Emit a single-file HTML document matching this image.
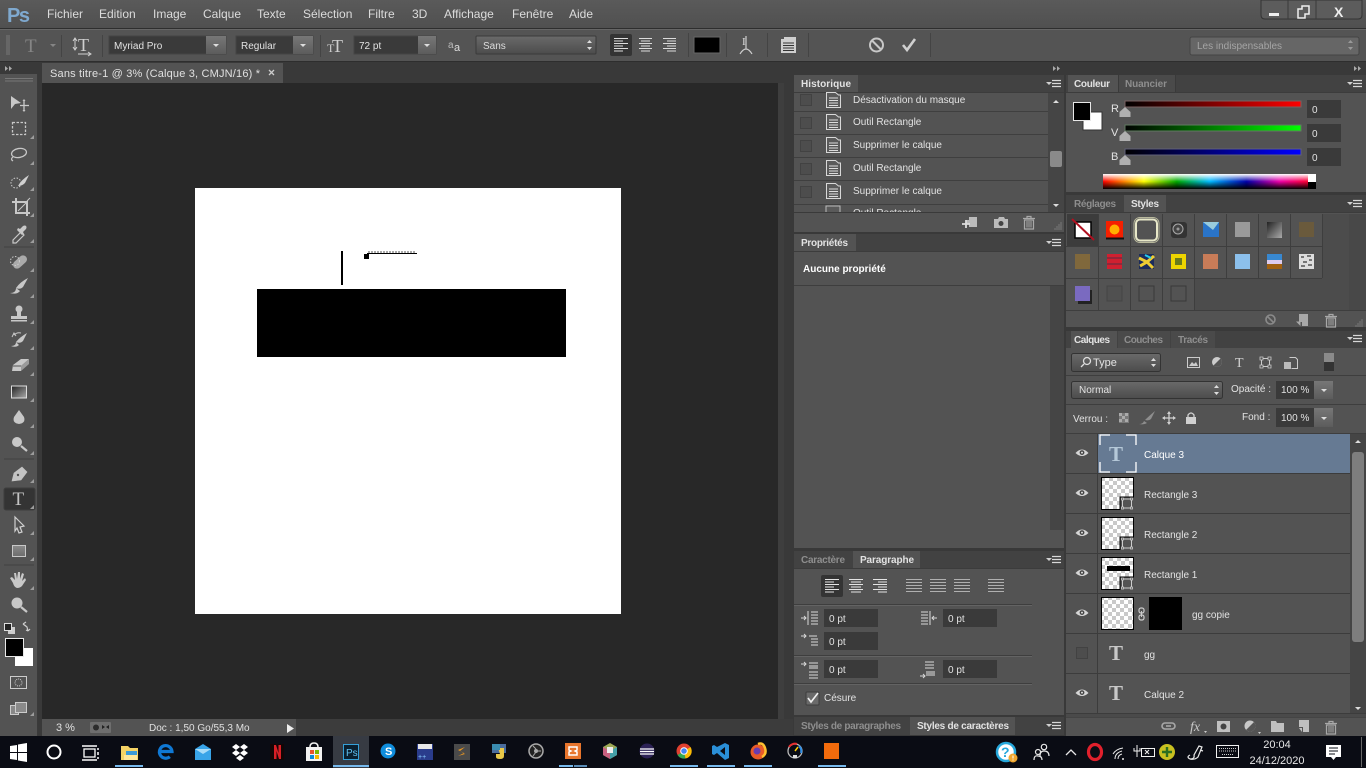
<!DOCTYPE html>
<html lang="fr"><head><meta charset="utf-8"><title>Photoshop</title>
<style>
html,body{margin:0;padding:0;background:#535353;overflow:hidden;width:1366px;height:768px}
svg{display:block}
text{font-family:"Liberation Sans",sans-serif;font-size:10px;fill:#e2e2e2}
.m{font-size:12px;fill:#dcdcdc}
.d{fill:#8e8e8e}
.b{font-weight:bold}
.w{fill:#fff}
.ic{fill:none;stroke:#cfcfcf;stroke-width:1.2}
.g{fill:#c4c4c4}
</style></head><body>
<svg width="1366" height="768" viewBox="0 0 1366 768" xmlns="http://www.w3.org/2000/svg">
<defs>
<linearGradient id="bar" x1="0" y1="0" x2="0" y2="1"><stop offset="0" stop-color="#5a5a5a"/><stop offset="1" stop-color="#505050"/></linearGradient>
<linearGradient id="btn" x1="0" y1="0" x2="0" y2="1"><stop offset="0" stop-color="#777"/><stop offset="1" stop-color="#5c5c5c"/></linearGradient>
<linearGradient id="sel" x1="0" y1="0" x2="0" y2="1"><stop offset="0" stop-color="#6a6a6a"/><stop offset="1" stop-color="#4c4c4c"/></linearGradient>
<linearGradient id="gr"><stop offset="0" stop-color="#000"/><stop offset="1" stop-color="#f00"/></linearGradient>
<linearGradient id="gg"><stop offset="0" stop-color="#000"/><stop offset="1" stop-color="#0f0"/></linearGradient>
<linearGradient id="gb"><stop offset="0" stop-color="#000"/><stop offset="1" stop-color="#00f"/></linearGradient>
<linearGradient id="hue"><stop offset="0" stop-color="#f00"/><stop offset=".2" stop-color="#ff0"/><stop offset=".36" stop-color="#0a0"/><stop offset=".52" stop-color="#0bf"/><stop offset=".7" stop-color="#00a"/><stop offset=".86" stop-color="#e0a"/><stop offset="1" stop-color="#f03"/></linearGradient>
<linearGradient id="wh" x1="0" y1="0" x2="0" y2="1"><stop offset="0" stop-color="#fff"/><stop offset=".5" stop-color="#fff" stop-opacity="0"/><stop offset=".5" stop-color="#000" stop-opacity="0"/><stop offset="1" stop-color="#000"/></linearGradient>
<linearGradient id="grey" x1="0" y1="0" x2="1" y2="1"><stop offset="0" stop-color="#222"/><stop offset="1" stop-color="#aaa"/></linearGradient>
<linearGradient id="thumb" x1="0" y1="0" x2="0" y2="1"><stop offset="0" stop-color="#8a8a8a"/><stop offset="1" stop-color="#6c6c6c"/></linearGradient>
<pattern id="chk" width="8" height="8" patternUnits="userSpaceOnUse"><rect width="8" height="8" fill="#fff"/><rect width="4" height="4" fill="#c9c9c9"/><rect x="4" y="4" width="4" height="4" fill="#c9c9c9"/></pattern>
<symbol id="fly" width="16" height="8" viewBox="0 0 16 8" overflow="visible"><path d="M0 2h6l-3 3z" fill="#d0d0d0"/><path d="M6 .5h9M6 3.5h9M6 6.5h9" stroke="#d8d8d8" stroke-width="1.2"/></symbol>
<symbol id="doc" width="15" height="16" viewBox="0 0 15 16" overflow="visible"><path d="M.5.5h9l3 2.5h2v12.500h-14z" fill="#5a5a5a" stroke="#d8d8d8"/><path d="M3 6h9M3 8.500h9M3 11h9M3 13.500h9" stroke="#dcdcdc"/></symbol>
<symbol id="eye" width="14" height="10" viewBox="0 0 14 10" overflow="visible"><path d="M.5 5Q7-2 13.500 5 7 11 .5 5z" fill="#d6d6d6"/><circle cx="7" cy="4.600" r="2.400" fill="#444"/><circle cx="7" cy="4.600" r="1" fill="#ddd"/></symbol>
<symbol id="rthumb" width="34" height="34" viewBox="0 0 34 34" overflow="visible"><rect x=".5" y=".5" width="32" height="32" fill="url(#chk)" stroke="#000"/><rect x="19" y="20" width="15" height="14" fill="#535353"/><path d="M19 33V20h14" fill="none" stroke="#000"/><rect x="21.500" y="22" width="9" height="9" fill="none" stroke="#ccc"/><path d="M20.500 21h2v2h-2zM29.500 21h2v2h-2zM20.500 30h2v2h-2zM29.500 30h2v2h-2z" fill="#535353" stroke="#ccc" stroke-width=".8"/></symbol>
<symbol id="trash" width="12" height="13" viewBox="0 0 12 13" overflow="visible"><path d="M0 2.500h12M4 2.500V.5h4v2" fill="none" stroke="#a8a8a8" stroke-width="1.200"/><path d="M1.500 4h9v9h-9z" fill="none" stroke="#a8a8a8" stroke-width="1.200"/><path d="M4 5v6.500M6 5v6.500M8 5v6.500" stroke="#a8a8a8"/></symbol>
<symbol id="newl" width="12" height="12" viewBox="0 0 12 12" overflow="visible"><path d="M3 0h9v12H6V8H3z" fill="#a8a8a8"/><path d="M0 7.500h4.500V12z" fill="#a8a8a8"/></symbol>
<symbol id="grip" width="8" height="8" viewBox="0 0 8 8" overflow="visible"><path d="M6.500 .5h1v1h-1zM4.500 2.500h1v1h-1zM6.500 2.500h1v1h-1zM2.500 4.500h1v1h-1zM4.500 4.500h1v1h-1zM6.500 4.500h1v1h-1zM.5 6.500h1v1h-1zM2.500 6.500h1v1h-1zM4.500 6.500h1v1h-1zM6.500 6.500h1v1h-1z" fill="#9a9a9a"/></symbol>
<symbol id="lines" width="16" height="13" viewBox="0 0 16 13" overflow="visible"><path d="M0 .5h16M0 3.500h16M0 6.500h16M0 9.500h16M0 12.500h16" stroke="#b0b0b0"/></symbol>
<symbol id="cor" width="4" height="4" viewBox="0 0 4 4"><path d="M0 4L4 0v4z" fill="#9c9c9c"/></symbol>
</defs>

<!-- base -->
<rect width="1366" height="768" fill="#535353"/>
<rect width="1366" height="28" fill="url(#bar)"/>
<rect y="28" width="1366" height="1" fill="#2e2e2e"/>
<rect y="29" width="1366" height="33" fill="#545454"/>
<rect y="29" width="1366" height="1" fill="#666"/>
<rect y="61" width="1366" height="1" fill="#2e2e2e"/>

<!-- menu -->
<text x="7" y="22" style="font-size:20px;fill:#7fa9cf;font-weight:bold" textLength="23">Ps</text>
<text class="m" x="47" y="18">Fichier</text>
<text class="m" x="99" y="18">Edition</text>
<text class="m" x="153" y="18">Image</text>
<text class="m" x="203" y="18">Calque</text>
<text class="m" x="257" y="18">Texte</text>
<text class="m" x="303" y="18">Sélection</text>
<text class="m" x="368" y="18">Filtre</text>
<text class="m" x="412" y="18">3D</text>
<text class="m" x="444" y="18">Affichage</text>
<text class="m" x="512" y="18">Fenêtre</text>
<text class="m" x="569" y="18">Aide</text>

<!-- window buttons -->
<path d="M1261 0v15q0 4 4 4h93q4 0 4-4V0z" fill="#5c5c5c" stroke="#333"/>
<path d="M1288 0v19M1316 0v19" stroke="#3a3a3a"/>
<rect x="1269" y="13" width="10" height="3" fill="#eee"/>
<path d="M1298 9h4v-3h7v8h-4v4h-7z" fill="none" stroke="#eee" stroke-width="1.500"/>
<text x="1334" y="17" style="font-size:14px;font-weight:bold;fill:#eee">X</text>

<!-- options bar -->
<g stroke="#444"><path d="M61.500 35v22M102.500 35v22M320.500 35v22M688.500 33v24M726.500 33v24M767.500 33v24M808.500 33v24M930.500 33v24"/></g>
<path d="M6 36h4M6 38h4M6 40h4M6 42h4M6 44h4M6 46h4M6 48h4M6 50h4M6 52h4M6 54h4" stroke="#777"/>
<text x="25" y="52" style="font-family:'Liberation Serif',serif;font-size:19px;fill:#858585">T</text>
<path d="M50 44h6l-3 3z" fill="#858585"/>
<text x="78" y="51" style="font-family:'Liberation Serif',serif;font-size:18px;fill:#cfcfcf">T</text>
<path d="M75 38v12M73 41l2-3 2 3M73 47l2 3 2-3M78 54h12M88 52l3 2-3 2" fill="none" stroke="#cfcfcf"/>

<rect x="109" y="36" width="117" height="18" fill="#3a3a3a" stroke="#444"/>
<rect x="206" y="36" width="20" height="18" fill="url(#btn)"/>
<path d="M213 44h6l-3 3z" fill="#ddd"/>
<text x="114" y="49">Myriad Pro</text>
<rect x="236" y="36" width="77" height="18" fill="#3a3a3a" stroke="#444"/>
<rect x="293" y="36" width="20" height="18" fill="url(#btn)"/>
<path d="M300 44h6l-3 3z" fill="#ddd"/>
<text x="241" y="49">Regular</text>
<text x="332" y="52" style="font-family:'Liberation Serif',serif;font-size:18px;fill:#cfcfcf">T</text>
<text x="327" y="52" style="font-family:'Liberation Serif',serif;font-size:12px;fill:#cfcfcf">T</text>
<rect x="354" y="36" width="82" height="18" fill="#3a3a3a" stroke="#444"/>
<rect x="418" y="36" width="18" height="18" fill="url(#btn)"/>
<path d="M424 44h6l-3 3z" fill="#ddd"/>
<text x="359" y="49">72 pt</text>
<text x="448" y="48" style="font-size:10px;fill:#bbb">a</text>
<text x="454" y="51" style="font-size:11px;fill:#ddd">a</text>
<rect x="476" y="36" width="120" height="18" fill="url(#sel)" stroke="#3a3a3a" rx="1"/>
<text x="483" y="49" style="fill:#ddd">Sans</text>
<path d="M587 43l2.500-3 2.500 3zM587 47l2.500 3 2.500-3z" fill="#ddd"/>

<rect x="610" y="34" width="22" height="22" rx="2" fill="#343434"/>
<g stroke="#dcdcdc"><path d="M614 38.500h14M614 41h9M614 43.500h14M614 46h9M614 48.500h14M614 51h9"/>
<path d="M639 38.500h13M641 41h9M639 43.500h13M641 46h9M639 48.500h13M641 51h9"/>
<path d="M663 38.500h13M667 41h9M663 43.500h13M667 46h9M663 48.500h13M667 51h9"/></g>
<rect x="694" y="37" width="26" height="16" fill="#000" stroke="#666"/>
<text x="742" y="45" style="font-family:'Liberation Serif',serif;font-size:11px;fill:#ddd">I</text>
<path d="M740 54q6-10 12 0M746 36v13" fill="none" stroke="#d0d0d0" stroke-width="1.200"/>
<path d="M781 39h3v-2h12v16h-15z" fill="#cfcfcf"/><path d="M783 43h11M783 45.500h11M783 48h11M783 50.500h11" stroke="#333"/>
<circle cx="876.500" cy="45" r="6.500" fill="none" stroke="#c8c8c8" stroke-width="2"/><path d="M872 40.500l9 9" stroke="#c8c8c8" stroke-width="2"/>
<path d="M903 45l4 5 8-11" fill="none" stroke="#d0d0d0" stroke-width="2.600"/>
<rect x="1190" y="37" width="169" height="18" rx="2" fill="#666" stroke="#444"/>
<text x="1197" y="49" style="fill:#a5a5a5">Les indispensables</text>
<path d="M1348 43l2.500-3 2.500 3zM1348 47l2.500 3 2.500-3z" fill="#999"/>

<!-- doc area -->
<rect y="62" width="1366" height="12" fill="#393939"/>
<rect x="38" y="62" width="755" height="21" fill="#393939"/>
<rect x="42" y="63" width="241" height="20" fill="#535353"/>
<text x="50" y="77" style="fill:#e0e0e0;font-size:11px" textLength="210">Sans titre-1 @ 3% (Calque 3, CMJN/16) *</text>
<path d="M269 70l5 5M274 70l-5 5" stroke="#ccc" stroke-width="1.300"/>
<rect x="42" y="83" width="736" height="636" fill="#282828"/>
<rect x="778" y="83" width="15" height="652" fill="#3e3e3e"/>
<rect x="784" y="83" width="9" height="652" fill="#393939"/>
<rect x="38" y="62" width="4" height="674" fill="#393939"/>
<rect x="296" y="719" width="497" height="17" fill="#3c3c3c"/>
<rect x="42" y="719" width="254" height="17" fill="#535353"/>
<text x="56" y="731" style="font-size:11px;fill:#e0e0e0">3 %</text>
<rect x="90" y="722" width="21" height="11" rx="1" fill="#6e6e6e"/>
<circle cx="96" cy="727.500" r="3" fill="#2c2c2c"/><path d="M102 725l3 2-3 2zM109 725l-3 2 3 2z" fill="#222"/>
<text x="149" y="731" style="fill:#e0e0e0">Doc : 1,50 Go/55,3 Mo</text>
<path d="M287 724l7 4.500-7 4.500z" fill="#eee"/>

<!-- canvas -->
<rect x="195" y="188" width="426" height="426" fill="#fff"/>
<rect x="257" y="289" width="309" height="68" fill="#000"/>
<rect x="341" y="251" width="2" height="34" fill="#000"/>
<rect x="364" y="254" width="5" height="5" fill="#000"/>
<rect x="367" y="253" width="50" height="1" fill="#000"/>
<path d="M369 251v2M372 251v2M375 251v2M378 251v2M381 251v2M384 251v2M387 251v2M390 251v2M393 251v2M396 251v2M399 251v2M402 251v2M405 251v2M408 251v2M411 251v2M414 251v2" stroke="#555"/>

<!-- toolbar -->
<rect y="62" width="38" height="12" fill="#393939"/>
<path d="M5 66l3 2.500-3 2.500zM9 66l3 2.500-3 2.500z" fill="#aaa"/>
<rect y="74" width="38" height="662" fill="#535353"/>
<path d="M5 78.500h28M5 81h28" stroke="#777"/>
<rect y="720" width="38" height="16" fill="#535353"/>
<rect x="37" y="74" width="1" height="662" fill="#3a3a3a"/>
<path d="M4 247h30M4 459h30M4 565h30" stroke="#404040"/>

<path d="M11 96l10 7-6 1-4 5z" fill="#c8c8c8"/><path d="M24 101v9M20 105.500h9" stroke="#c8c8c8" stroke-width="1.300"/><path d="M22.500 101l1.500-2 1.500 2zM22.500 110l1.500 2 1.500-2z" fill="#c8c8c8"/>
<rect x="12.500" y="122.500" width="13" height="12" fill="none" stroke="#c8c8c8" stroke-width="1.300" stroke-dasharray="2.500 1.500"/>
<ellipse cx="19" cy="153" rx="7.500" ry="4.500" fill="none" stroke="#c8c8c8" stroke-width="1.300" transform="rotate(-10 19 153)"/><path d="M13 157q-3 2 0 4" fill="none" stroke="#c8c8c8" stroke-width="1.300"/>
<circle cx="16" cy="183" r="5" fill="none" stroke="#d0d0d0" stroke-dasharray="1.500 1.500"/><path d="M18 186q3-6 11-11l-4 8q-3 3-7 3z" fill="#d0d0d0"/>
<path d="M12 202h15v14M16 198v15h14" fill="none" stroke="#c8c8c8" stroke-width="2"/><path d="M18 211l9-9M30 198l-3 3" stroke="#c8c8c8"/>
<path d="M13 240l8-8 3 3-8 8h-3z" fill="none" stroke="#c8c8c8" stroke-width="1.200"/><path d="M20 229l3-3q2-1 3 0t0 3l-3 3 1 2-2 1-5-5 1-2z" fill="#c8c8c8"/>
<rect x="12" y="258" width="16" height="8" rx="4" transform="rotate(-42 20 262)" fill="#aaa"/><circle cx="15" cy="261" r="4.500" fill="none" stroke="#ccc" stroke-dasharray="1.500 1.500"/>
<path d="M16 288q4-6 12-10l-5 9q-3 3-7 1z" fill="#c8c8c8"/><path d="M10 293q6 0 6-5l4 3q-3 4-10 2z" fill="#c8c8c8"/>
<circle cx="19" cy="309" r="3.500" fill="#c8c8c8"/><rect x="17" y="311" width="4" height="5" fill="#c8c8c8"/><rect x="11" y="316" width="16" height="3" fill="#c8c8c8"/><rect x="11" y="320" width="16" height="1.500" fill="#c8c8c8"/>
<path d="M16 342q4-5 11-9l-4 8q-3 3-7 1zM11 346q5 0 5-4l3 3q-3 3-8 1z" fill="#c8c8c8"/><path d="M14 335q3-3 7-2M12 337l2-4 2 3" fill="none" stroke="#c8c8c8"/>
<path d="M13 365l8-6h8l-8 7v5h-9z" fill="#c8c8c8"/><path d="M21 366h-8" stroke="#535353"/><path d="M21 366l8-7v5l-8 7z" fill="#9a9a9a"/>
<rect x="11.500" y="386" width="15" height="12" fill="url(#grey)" stroke="#ddd"/>
<path d="M19 410l5 7q2 6-5 7-7-1-5-7z" fill="#c8c8c8"/>
<circle cx="17" cy="442" r="5" fill="#c8c8c8"/><path d="M21 446l6 5" stroke="#c8c8c8" stroke-width="2.200"/>
<path d="M12 481l2-8 8-6 5 5-6 8zM19 476l-6 5" fill="#c4c4c4" stroke="#c4c4c4" stroke-width=".6"/><circle cx="18" cy="475" r="1.200" fill="#535353"/>
<rect x="4" y="488" width="31" height="22" rx="2" fill="#343434" stroke="#3e3e3e"/>
<text x="12.500" y="505" style="font-family:'Liberation Serif',serif;font-size:19px;fill:#c4c4c4">T</text>
<path d="M15 517l9 9-4 1 2 5-3 1-2-5-2 3z" fill="#535353" stroke="#d0d0d0" stroke-width="1.200"/>
<rect x="12.500" y="545.500" width="13" height="11" fill="url(#thumb)" stroke="#c8c8c8"/>
<path d="M13 583l-3-5 2-1 3 3-1-7h2l1 6 1-7h2v7l2-6 2 1-2 7 3-3 1 2-4 6q-2 2-5 2-3-1-4-5z" fill="#c8c8c8"/>
<circle cx="17" cy="603" r="5.500" fill="#c8c8c8"/><path d="M21 607l6 5" stroke="#c8c8c8" stroke-width="2.200"/>
<rect x="8" y="627" width="7" height="7" fill="#ccc" /><rect x="4.500" y="623.500" width="7" height="7" fill="#222" stroke="#ddd"/>
<path d="M23 624l4 3 1 4M23 624l3-2M23 624l3 2M28 631l-2-1M28 631l2-2" fill="none" stroke="#ccc" stroke-width="1.200"/>
<rect x="15" y="648" width="18" height="18" fill="#fff"/>
<rect x="5.500" y="638.500" width="18" height="18" fill="#000" stroke="#e8e8e8"/>
<rect x="10.500" y="676.500" width="16" height="12" fill="none" stroke="#ccc"/><circle cx="18.500" cy="682.500" r="3.500" fill="none" stroke="#ccc" stroke-dasharray="1 1"/>
<rect x="10.500" y="705.500" width="8" height="9" fill="#888" stroke="#ccc"/><rect x="15.500" y="702.500" width="11" height="10" fill="#8a8a8a" stroke="#ccc"/>
<g><use href="#cor" x="30" y="135"/><use href="#cor" x="30" y="161"/><use href="#cor" x="30" y="187"/><use href="#cor" x="30" y="213"/><use href="#cor" x="30" y="239"/><use href="#cor" x="30" y="268"/><use href="#cor" x="30" y="294"/><use href="#cor" x="30" y="320"/><use href="#cor" x="30" y="346"/><use href="#cor" x="30" y="372"/><use href="#cor" x="30" y="398"/><use href="#cor" x="30" y="424"/><use href="#cor" x="30" y="451"/><use href="#cor" x="30" y="479"/><use href="#cor" x="30" y="505"/><use href="#cor" x="30" y="531"/><use href="#cor" x="30" y="557"/><use href="#cor" x="30" y="586"/><use href="#cor" x="30" y="712"/></g>

<!-- panel column collapse bars -->
<rect x="793" y="62" width="573" height="674" fill="#393939"/>
<path d="M1053 66l3 2.500-3 2.500zM1057 66l3 2.500-3 2.500zM1354 66l3 2.500-3 2.500zM1358 66l3 2.500-3 2.500z" fill="#aaa"/>

<!-- HISTORIQUE -->
<rect x="794" y="75" width="270" height="157" fill="#535353"/>
<rect x="794" y="75" width="270" height="17" fill="#424242"/>
<rect x="794" y="75" width="64" height="17" fill="#535353"/>
<text class="b" x="801" y="87" textLength="50">Historique</text>
<use href="#fly" x="1046" y="80"/>
<rect x="794" y="92" width="270" height="1" fill="#3c3c3c"/>
<g fill="#3f3f3f">
<rect x="794" y="111" width="254" height="1"/><rect x="794" y="134" width="254" height="1"/><rect x="794" y="157" width="254" height="1"/><rect x="794" y="180" width="254" height="1"/><rect x="794" y="204" width="254" height="1"/></g>
<g fill="#4d4d4d" stroke="#424242"><rect x="800.500" y="94.500" width="11" height="11"/><rect x="800.500" y="117.500" width="11" height="11"/><rect x="800.500" y="140.500" width="11" height="11"/><rect x="800.500" y="163.500" width="11" height="11"/><rect x="800.500" y="186.500" width="11" height="11"/></g>
<use href="#doc" x="826" y="92"/><use href="#doc" x="826" y="114"/><use href="#doc" x="826" y="137"/><use href="#doc" x="826" y="160"/><use href="#doc" x="826" y="183"/>
<text x="853" y="103">Désactivation du masque</text>
<text x="853" y="125">Outil Rectangle</text>
<text x="853" y="148">Supprimer le calque</text>
<text x="853" y="171">Outil Rectangle</text>
<text x="853" y="194">Supprimer le calque</text>
<rect x="1048" y="93" width="16" height="120" fill="#454545"/>
<rect x="1050" y="151" width="12" height="16" rx="2" fill="#8a8a8a"/>
<path d="M1053 103h6l-3-3zM1053 204h6l-3 3z" fill="#ddd"/>
<rect x="826" y="206" width="14" height="7" fill="#5a5a5a" stroke="#bbb"/>
<svg x="794" y="204" width="254" height="8"><text x="59" y="12">Outil Rectangle</text></svg>
<rect x="794" y="212" width="270" height="20" fill="#535353"/>
<rect x="794" y="212" width="270" height="1" fill="#3a3a3a"/>
<path d="M966 220h3v-3h8v10h-8v-3h-3z" fill="#bbb"/><path d="M962 224h8M966 220v8" stroke="#ddd" stroke-width="1.800"/>
<path d="M994 219h4l1-2h5l1 2h3v9h-14z" fill="#bbb"/><circle cx="1001" cy="223.500" r="2.500" fill="#444"/>
<use href="#trash" x="1023" y="216"/>
<use href="#grip" x="1054" y="222"/>

<!-- PROPRIETES -->
<rect x="794" y="234" width="270" height="314" fill="#535353"/>
<rect x="794" y="234" width="270" height="17" fill="#424242"/>
<rect x="794" y="234" width="62" height="17" fill="#535353"/>
<text class="b" x="801" y="246" textLength="47">Propriétés</text>
<use href="#fly" x="1046" y="239"/>
<rect x="794" y="251" width="270" height="1" fill="#3c3c3c"/>
<text class="b w" x="803" y="272">Aucune propriété</text>
<rect x="794" y="285" width="270" height="1" fill="#3e3e3e"/>
<rect x="1050" y="286" width="14" height="244" fill="#454545"/>

<!-- PARAGRAPHE -->
<rect x="794" y="551" width="270" height="164" fill="#535353"/>
<rect x="794" y="551" width="270" height="17" fill="#424242"/>
<rect x="853" y="551" width="67" height="17" fill="#535353"/>
<text class="d b" x="801" y="563" textLength="44">Caractère</text>
<text class="b" x="860" y="563" textLength="54">Paragraphe</text>
<use href="#fly" x="1046" y="556"/>
<rect x="794" y="568" width="270" height="1" fill="#3c3c3c"/>
<rect x="821" y="575" width="22" height="22" rx="2" fill="#343434"/>
<g stroke="#e4e4e4"><path d="M825 579.500h14M825 582h9M825 584.500h14M825 587h9M825 589.500h14M825 592h9"/>
<path d="M849 579.500h14M851 582h10M849 584.500h14M851 587h10M849 589.500h14M851 592h10"/>
<path d="M873 579.500h14M878 582h9M873 584.500h14M878 587h9M873 589.500h14M878 592h9"/></g>
<use href="#lines" x="906" y="579"/><use href="#lines" x="930" y="579"/><use href="#lines" x="954" y="579"/><use href="#lines" x="988" y="579"/>
<path d="M794 604.500h238M794 655.500h238M794 683.500h238" stroke="#3e3e3e"/>
<path d="M794 605.500h238M794 656.500h238M794 684.500h238" stroke="#636363"/>
<g fill="#3a3a3a"><rect x="824" y="609" width="54" height="18"/><rect x="943" y="609" width="54" height="18"/><rect x="824" y="632" width="54" height="18"/><rect x="824" y="660" width="54" height="18"/><rect x="943" y="660" width="54" height="18"/></g>
<text x="829" y="622">0 pt</text><text x="948" y="622">0 pt</text><text x="829" y="645">0 pt</text><text x="829" y="673">0 pt</text><text x="948" y="673">0 pt</text>
<g stroke="#d8d8d8" fill="none"><path d="M801 618h5M804 616l2 2-2 2M808 611v14M811 612h7M811 615h7M811 618h7M811 621h7M811 624h7"/>
<path d="M921 612h7M921 615h7M921 618h7M921 621h7M921 624h7M930 611v14M937 618h-5M934 616l-2 2 2 2"/>
<path d="M801 636h5M804 634l2 2-2 2M809 636h8M811 639h7M811 642h7M811 645h7"/>
<path d="M801 664h5M804 662l2 2-2 2M809 663h9M809 672h9M809 675h9M809 678h9"/><rect x="809" y="665" width="9" height="4" fill="#999" stroke="none"/>
<path d="M925 662h9M925 665h9M925 668h9M920 676h5M923 674l2 2-2 2"/><rect x="926" y="671" width="9" height="5" fill="#999" stroke="none"/></g>
<rect x="806" y="692" width="13" height="13" rx="1" fill="#6a6a6a" stroke="#3e3e3e"/>
<path d="M808 698l3 4 7-9" fill="none" stroke="#f0f0f0" stroke-width="1.600"/>
<text x="824" y="701">Césure</text>

<!-- bottom tabs middle -->
<rect x="794" y="717" width="270" height="18" fill="#424242"/>
<rect x="910" y="717" width="105" height="18" fill="#535353"/>
<text class="d b" x="801" y="729" textLength="100">Styles de paragraphes</text>
<text class="b" x="917" y="729" textLength="92">Styles de caractères</text>
<use href="#fly" x="1046" y="722"/>

<!-- COULEUR -->
<rect x="1066" y="75" width="300" height="117" fill="#535353"/>
<rect x="1066" y="75" width="300" height="17" fill="#424242"/>
<rect x="1068" y="75" width="50" height="17" fill="#535353"/>
<rect x="1118" y="75" width="1" height="17" fill="#3a3a3a"/><rect x="1175" y="75" width="1" height="17" fill="#3a3a3a"/>
<rect x="1119" y="75" width="56" height="17" fill="#4a4a4a"/>
<text class="b" x="1074" y="87" textLength="36">Couleur</text>
<text class="d b" x="1125" y="87" textLength="42">Nuancier</text>
<use href="#fly" x="1347" y="80"/>
<rect x="1066" y="92" width="300" height="1" fill="#3c3c3c"/>
<rect x="1083" y="112" width="19" height="18" fill="#fff" stroke="#333"/>
<rect x="1073.500" y="102.500" width="17" height="18" fill="#000" stroke="#e8e8e8"/>
<text x="1111" y="112" style="font-size:11px">R</text><text x="1111" y="136" style="font-size:11px">V</text><text x="1111" y="160" style="font-size:11px">B</text>
<rect x="1125" y="101" width="176" height="6" fill="url(#gr)" stroke="#7a6060"/>
<rect x="1125" y="125" width="176" height="6" fill="url(#gg)" stroke="#607a60"/>
<rect x="1125" y="149" width="176" height="6" fill="url(#gb)" stroke="#60607a"/>
<path d="M1125 107l5.500 5v5h-11v-5z" fill="#b0b0b0"/><path d="M1125 131l5.500 5v5h-11v-5z" fill="#b0b0b0"/><path d="M1125 155l5.500 5v5h-11v-5z" fill="#b0b0b0"/>
<g fill="#3a3a3a"><rect x="1307" y="100" width="34" height="18"/><rect x="1307" y="124" width="34" height="18"/><rect x="1307" y="148" width="34" height="18"/></g>
<text x="1312" y="113">0</text><text x="1312" y="137">0</text><text x="1312" y="161">0</text>
<rect x="1103" y="174" width="205" height="15" fill="url(#hue)"/>
<rect x="1103" y="174" width="205" height="15" fill="url(#wh)"/>
<rect x="1308" y="174" width="8" height="8" fill="#fff"/><rect x="1308" y="182" width="8" height="7" fill="#000"/>

<!-- STYLES -->
<rect x="1066" y="195" width="300" height="132" fill="#535353"/>
<rect x="1066" y="195" width="300" height="17" fill="#424242"/>
<rect x="1124" y="195" width="42" height="17" fill="#535353"/>
<text class="d b" x="1074" y="207" textLength="42">Réglages</text>
<text class="b" x="1131" y="207" textLength="28">Styles</text>
<use href="#fly" x="1347" y="200"/>
<rect x="1066" y="212" width="300" height="1" fill="#3c3c3c"/>
<rect x="1322" y="214" width="27" height="96" fill="#4c4c4c"/>
<rect x="1194" y="278" width="155" height="32" fill="#4c4c4c"/>
<rect x="1349" y="214" width="17" height="96" fill="#484848"/>
<g stroke="#3e3e3e"><path d="M1066 246.500h256M1066 278.500h256M1066 310.500h300M1098.500 214v96M1130.500 214v96M1162.500 214v96M1194.500 214v96M1226.500 214v64M1258.500 214v64M1290.500 214v64M1322.500 214v64"/></g>
<rect x="1067" y="214" width="31" height="32" fill="#3c3c3c"/>
<rect x="1075" y="222" width="16" height="16" fill="#fff" stroke="#000" stroke-width="1.500"/><path d="M1072 219l22 21" stroke="#b01020" stroke-width="2"/>
<rect x="1106" y="221" width="17" height="17" fill="#f52000"/><circle cx="1114.500" cy="229.500" r="5" fill="#ffb000"/><path d="M1106 238.500h18" stroke="#111" stroke-width="2"/>
<rect x="1136" y="219.500" width="21" height="21" rx="4" fill="none" stroke="#e8e8c8" stroke-width="2"/><rect x="1134" y="217.500" width="25" height="25" rx="6" fill="none" stroke="#b8b89c"/>
<rect x="1171" y="222" width="16" height="16" rx="3" fill="#333"/><circle cx="1178" cy="229" r="5" fill="#444" stroke="#aaa"/><circle cx="1178" cy="229" r="1.500" fill="#999"/>
<rect x="1203" y="222" width="16" height="15" fill="#2a74c8"/><path d="M1203 222h16l-6 8z" fill="#9cd"/>
<rect x="1235" y="222" width="15" height="15" fill="#9a9a9a"/>
<rect x="1267" y="222" width="15" height="16" fill="url(#grey)"/>
<rect x="1299" y="222" width="15" height="15" fill="#6a5a3c"/>
<rect x="1075" y="254" width="15" height="15" fill="#80683c"/>
<rect x="1107" y="254" width="15" height="15" fill="#d02030"/><path d="M1107 258h15M1107 264h15" stroke="#80283c" stroke-width="1.500"/>
<rect x="1139" y="254" width="15" height="15" fill="#1c2c5c"/><path d="M1139 258l8 4 7-6M1140 266l7-4 6 6" stroke="#ec3" stroke-width="3" fill="none"/><path d="M1145 255l6 3" stroke="#2ce" stroke-width="2"/>
<rect x="1171" y="254" width="15" height="15" fill="#eed400"/><rect x="1175" y="258" width="7" height="7" fill="#6a7a1a"/>
<rect x="1203" y="254" width="15" height="15" fill="#c87c58"/>
<rect x="1235" y="254" width="15" height="15" fill="#8cc0ec"/>
<rect x="1267" y="254" width="15" height="6" fill="#3888d0"/><rect x="1267" y="260" width="15" height="4" fill="#dce"/><rect x="1267" y="264" width="15" height="5" fill="#a06010"/>
<rect x="1299" y="254" width="15" height="15" fill="#ddd"/><path d="M1301 257h3M1307 256h4M1303 262h4M1309 260h3M1301 266h4M1308 265h4" stroke="#555" stroke-width="1.500"/>
<rect x="1078" y="290" width="14" height="14" fill="#222"/><rect x="1075" y="286" width="15" height="15" fill="#7a6ac0"/>
<rect x="1107" y="286" width="15" height="15" fill="#505050" stroke="#444"/>
<rect x="1139" y="286" width="15" height="15" fill="none" stroke="#383838"/>
<rect x="1171" y="286" width="15" height="15" fill="none" stroke="#383838"/>
<circle cx="1270.500" cy="319.500" r="4.500" fill="none" stroke="#8a8a8a" stroke-width="1.600"/><path d="M1267 316l7 7" stroke="#8a8a8a" stroke-width="1.600"/>
<use href="#newl" x="1296" y="314"/>
<use href="#trash" x="1325" y="314"/>
<use href="#grip" x="1355" y="319"/>

<!-- CALQUES -->
<rect x="1066" y="331" width="300" height="405" fill="#535353"/>
<rect x="1066" y="331" width="300" height="17" fill="#424242"/>
<rect x="1071" y="331" width="46" height="17" fill="#535353"/>
<rect x="1118" y="331" width="52" height="17" fill="#4a4a4a"/><rect x="1171" y="331" width="44" height="17" fill="#4a4a4a"/>
<text class="b" x="1074" y="343" textLength="36">Calques</text>
<text class="d b" x="1124" y="343" textLength="39">Couches</text>
<text class="d b" x="1178" y="343" textLength="30">Tracés</text>
<use href="#fly" x="1347" y="335"/>
<rect x="1071.500" y="353.500" width="89" height="18" rx="2" fill="url(#sel)" stroke="#333"/>
<circle cx="1087" cy="361" r="3.500" fill="none" stroke="#ddd" stroke-width="1.300"/><path d="M1084 364l-3 3" stroke="#ddd" stroke-width="1.300"/>
<text x="1093" y="366" style="font-size:11px">Type</text>
<path d="M1151 361l2.500-3 2.500 3zM1151 364l2.500 3 2.500-3z" fill="#ddd"/>
<rect x="1187.500" y="357.500" width="12" height="10" fill="none" stroke="#ccc"/><path d="M1189 366l3-4 2 2 2-2 2 4z" fill="#ccc"/>
<circle cx="1217" cy="362" r="5" fill="#ccc"/><path d="M1217 357a5 5 0 0 1 0 10z" fill="#555" transform="rotate(45 1217 362)"/>
<text x="1235" y="367" style="font-family:'Liberation Serif',serif;font-size:14px;fill:#d0d0d0">T</text>
<rect x="1261.500" y="358.500" width="8" height="8" fill="none" stroke="#ccc"/><path d="M1260 357h3v3h-3zM1268 357h3v3h-3zM1260 365h3v3h-3zM1268 365h3v3h-3z" fill="#535353" stroke="#ccc" stroke-width=".8"/>
<path d="M1289.500 357.500h6l2 2v9h-6" fill="none" stroke="#ccc"/><rect x="1284" y="362" width="7" height="7" fill="#bbb"/>
<rect x="1324" y="353" width="10" height="18" fill="#333"/><rect x="1324" y="353" width="10" height="9" fill="#8a8a8a"/>
<rect x="1066" y="375" width="300" height="1" fill="#3e3e3e"/>

<rect x="1071.500" y="381.500" width="151" height="17" rx="2" fill="url(#sel)" stroke="#333"/>
<text x="1079" y="393">Normal</text>
<path d="M1214 388l2.500-3 2.500 3zM1214 392l2.500 3 2.500-3z" fill="#ddd"/>
<text x="1231" y="392">Opacité :</text>
<rect x="1276" y="381" width="38" height="18" fill="#3a3a3a"/><rect x="1314" y="381" width="19" height="18" fill="url(#btn)"/>
<text x="1281" y="393">100 %</text>
<path d="M1321 389h6l-3 3z" fill="#ddd"/>
<rect x="1066" y="404" width="300" height="1" fill="#3e3e3e"/>
<text x="1073" y="422">Verrou :</text>
<rect x="1119" y="413" width="10" height="10" fill="#7a7a7a"/><path d="M1119 413h3v3h-3zM1125 413h3v3h-3zM1122 416h3v3h-3zM1119 419h3v3h-3zM1125 419h3v3h-3z" fill="#aaa"/>
<path d="M1145 420q4-4 10-9l-4 8q-2 2-6 1zM1139 424q4 0 5-3l3 2q-3 2-8 1z" fill="#8e8e8e"/>
<path d="M1169 412v12M1163 418h12" stroke="#d0d0d0" stroke-width="1.300"/><path d="M1167 414l2-3 2 3zM1167 422l2 3 2-3zM1165 416l-3 2 3 2zM1173 416l3 2-3 2z" fill="#d0d0d0"/>
<rect x="1186" y="417" width="10" height="7" fill="#d0d0d0"/><path d="M1188 417v-2q3-4 6 0v2" fill="none" stroke="#d0d0d0" stroke-width="1.300"/>
<text x="1242" y="420">Fond :</text>
<rect x="1276" y="408" width="38" height="19" fill="#3a3a3a"/><rect x="1314" y="408" width="19" height="19" fill="url(#btn)"/>
<text x="1281" y="421">100 %</text>
<path d="M1321 417h6l-3 3z" fill="#ddd"/>
<rect x="1066" y="433" width="300" height="1" fill="#3e3e3e"/>

<!-- layers -->
<rect x="1097" y="434" width="253" height="39" fill="#667a93"/>
<rect x="1066" y="434" width="31" height="279" fill="#525252"/>
<path d="M1066 473.500h284M1066 513.500h284M1066 553.500h284M1066 593.500h284M1066 633.500h284M1066 673.500h284M1066 713.500h300" stroke="#3c3c3c"/>
<path d="M1097.500 434v279" stroke="#3c3c3c"/>
<g fill="none" stroke="#fff" stroke-width="1.300"><path d="M1100 445v-10h10M1126 435h10v10M1136 462v10h-10M1110 472h-10v-10"/></g>
<text x="1109" y="461" style="font-family:'Liberation Serif',serif;font-size:21px;font-weight:bold;fill:#b5c8d8">T</text>
<text class="w" x="1144" y="458">Calque 3</text>
<use href="#eye" x="1075" y="448"/>
<use href="#rthumb" x="1101" y="477"/><use href="#eye" x="1075" y="488"/><text x="1144" y="498">Rectangle 3</text>
<use href="#rthumb" x="1101" y="517"/><use href="#eye" x="1075" y="528"/><text x="1144" y="538">Rectangle 2</text>
<use href="#rthumb" x="1101" y="557"/><rect x="1107" y="566" width="23" height="5" fill="#000"/><use href="#eye" x="1075" y="568"/><text x="1144" y="578">Rectangle 1</text>
<rect x="1101.500" y="597.500" width="32" height="32" fill="url(#chk)" stroke="#000"/><use href="#eye" x="1075" y="608"/>
<rect x="1139" y="608" width="5" height="5" rx="2" fill="none" stroke="#ccc" stroke-width="1.200"/><rect x="1139" y="615" width="5" height="5" rx="2" fill="none" stroke="#ccc" stroke-width="1.200"/><path d="M1141.500 611v6" stroke="#ccc"/>
<rect x="1149" y="597" width="33" height="33" fill="#000"/>
<text x="1192" y="618">gg copie</text>
<rect x="1076.500" y="647.500" width="11" height="11" fill="#4d4d4d" stroke="#424242"/>
<text x="1109" y="660" style="font-family:'Liberation Serif',serif;font-size:21px;font-weight:bold;fill:#c8c8c8">T</text>
<text x="1144" y="658">gg</text>
<use href="#eye" x="1075" y="688"/>
<text x="1109" y="700" style="font-family:'Liberation Serif',serif;font-size:21px;font-weight:bold;fill:#c8c8c8">T</text>
<text x="1144" y="698">Calque 2</text>

<rect x="1350" y="434" width="16" height="279" fill="#454545"/>
<rect x="1352" y="452" width="12" height="190" rx="3" fill="#7e7e7e"/>
<path d="M1355 443h6l-3-3zM1355 707h6l-3 3z" fill="#ddd"/>
<rect x="1066" y="714" width="300" height="3" fill="#4a4a4a"/>
<rect x="1066" y="717" width="300" height="1" fill="#444"/>
<rect x="1162" y="723" width="13" height="6" rx="3" fill="none" stroke="#a8a8a8" stroke-width="1.600"/><path d="M1166 726h5" stroke="#a8a8a8" stroke-width="1.600"/>
<text x="1190" y="731" style="font-family:'Liberation Serif',serif;font-style:italic;font-size:14px;fill:#c8c8c8">fx</text><path d="M1204 731h3l-1.500 2z" fill="#ccc"/>
<rect x="1217" y="721" width="13" height="11" fill="#c0c0c0"/><circle cx="1223.500" cy="726.500" r="3" fill="#444"/>
<circle cx="1250" cy="726" r="5.500" fill="#c8c8c8"/><path d="M1250 720.500a5.500 5.500 0 0 1 0 11z" fill="#555" transform="rotate(45 1250 726)"/><path d="M1258 732h3l-1.500 2z" fill="#ccc"/>
<path d="M1271 721h5l1 2h7v9h-13z" fill="#c0c0c0"/>
<path d="M1299 720h10v12h-6v-5h-4z" fill="#c0c0c0"/><path d="M1299 728h3v4z" fill="#c0c0c0"/>
<use href="#trash" x="1325" y="721"/>

<!-- taskbar -->
<rect y="736" width="1366" height="32" fill="#0a0c14"/>
<path d="M10 746l7-1v7h-7zM18 744.500l9-1.500v9h-9zM10 753h7v7l-7-1zM18 753h9v9l-9-1.500z" fill="#fff"/>
<circle cx="54" cy="752" r="6.500" fill="none" stroke="#fff" stroke-width="2"/>
<path d="M82 746h15M82 760h15" stroke="#fff" stroke-width="1.500"/><rect x="84" y="749" width="11" height="8" fill="none" stroke="#fff" stroke-width="1.300"/><path d="M98 748v2M98 752v3M98 757v2" stroke="#fff" stroke-width="1.500"/>
<path d="M121 746h7l2 2h8v12h-17z" fill="#f5d365"/><rect x="126" y="751" width="11" height="8" fill="#3c9ad6"/><rect x="124" y="755" width="13" height="5" fill="#ffe79a"/>
<rect x="115" y="765" width="28" height="2" fill="#76b9ed"/>
<path d="M160 751.500h12a6.300 6.300 0 1 0-2.200 5.200" fill="none" stroke="#0f78d4" stroke-width="3.200"/>
<path d="M195 749l8-5 8 5v11h-16z" fill="#38a4e8"/><path d="M195 749l8 5 8-5" fill="#a8dcf8"/>
<path d="M236 744l4 3-4 3-4-3zM244 744l4 3-4 3-4-3zM236 750l4 3-4 3-4-3zM244 750l4 3-4 3-4-3zM240 755l4 3-4 3-4-3z" fill="#fff"/>
<rect x="270" y="744" width="14" height="16" fill="#140606"/><path d="M274 745v14h2.500v-8l2.500 8h2v-14h-2.500v8l-2.500-8z" fill="#d81f26"/>
<rect x="306" y="747" width="16" height="14" fill="#f2f2f2"/><path d="M310 747q0-4 4-4t4 4" fill="none" stroke="#f2f2f2" stroke-width="1.500"/><rect x="310" y="750" width="4" height="4" fill="#e8532b"/><rect x="315" y="750" width="4" height="4" fill="#7ab800"/><rect x="310" y="755" width="4" height="4" fill="#0a8bd8"/><rect x="315" y="755" width="4" height="4" fill="#f5b800"/>
<rect x="333" y="736" width="36" height="32" fill="#373b43"/>
<rect x="343.500" y="744.500" width="15" height="15" fill="#0a2030" stroke="#35a0d8"/>
<text x="346" y="756" style="font-size:10px;fill:#60c0f0">Ps</text>
<rect x="333" y="765" width="36" height="2" fill="#76b9ed"/>
<circle cx="388" cy="751" r="7.500" fill="#0f8ddc"/><text x="385" y="755" style="font-size:11px;font-weight:bold;fill:#fff">S</text>
<rect x="417" y="744" width="16" height="16" fill="#2a3c8c"/><rect x="418" y="744" width="14" height="5" fill="#e8e8e8"/><text x="418" y="759" style="font-size:7px;fill:#8cf">++</text>
<rect x="454" y="744" width="16" height="16" fill="#4a4a4a"/><path d="M465 747l-7 3 6 3-6 3 7-2-5-3z" fill="#f09a20"/>
<rect x="492" y="744" width="14" height="9" fill="#4a6c9c"/><path d="M498 748h6v8q0 3-4 3t-4-2v-3h4" fill="#e8c848"/><rect x="492" y="744" width="8" height="6" fill="#3a8cb0"/>
<circle cx="536" cy="751" r="7" fill="#222" stroke="#aaa" stroke-width="1.500"/><circle cx="536" cy="751" r="2" fill="#aaa"/><path d="M533 746l3 3M541 751h-4M533 756l3-4" stroke="#aaa"/>
<rect x="565" y="743" width="16" height="16" fill="#e8752c"/><path d="M569 747h8v3l-2 1 2 1v3h-8v-3l2-1-2-1z" fill="none" stroke="#fff" stroke-width="1.500"/>
<rect x="559" y="765" width="14" height="2" fill="#76b9ed"/><rect x="574" y="765" width="13" height="2" fill="#5a8db8"/>
<path d="M610 743l7 4v8l-7 4-7-4v-8z" fill="#9ca855"/><path d="M610 751l-7-4v8l7 4z" fill="#c86080"/><path d="M610 751l7-4v8l-7 4z" fill="#44a0a8"/><rect x="607" y="747" width="6" height="6" fill="#eee"/>
<circle cx="647" cy="751" r="7.500" fill="#2c2256"/><path d="M640 749h14M640 751.500h14M640 754h14" stroke="#fff" stroke-width="1.200"/>
<circle cx="684" cy="751" r="7.500" fill="#e04030"/><path d="M684 751l-6.500 4a7.500 7.500 0 0 0 8 3.500z" fill="#34a853"/><path d="M684 751l6.500-4a7.500 7.500 0 0 1-5 11.500z" fill="#fbbc05"/><circle cx="684" cy="751" r="3.300" fill="#4285f4" stroke="#fff"/>
<rect x="670" y="765" width="28" height="2" fill="#76b9ed"/>
<path d="M725 743l4 2v13l-4 2-8-7-3 2-2-1v-8l2-1 3 2zM725 747l-5 4 5 4z" fill="#2a8fd8" fill-rule="evenodd"/>
<rect x="707" y="765" width="28" height="2" fill="#76b9ed"/>
<circle cx="758" cy="752" r="7.500" fill="#e85a28"/><path d="M758 744q5-2 7 4 2 6-3 9" fill="none" stroke="#ffc030" stroke-width="2.500"/><circle cx="757" cy="751" r="3.500" fill="#6a3cb0"/>
<rect x="744" y="765" width="28" height="2" fill="#76b9ed"/>
<circle cx="795" cy="751" r="7" fill="none" stroke="#bbb" stroke-width="1.300"/><path d="M789 747a7 7 0 0 1 8-3" stroke="#e83030" stroke-width="2" fill="none"/><path d="M799 746a7 7 0 0 1 2 7" stroke="#3090e8" stroke-width="2" fill="none"/><path d="M795 751l3-4" stroke="#fc0" stroke-width="1.500"/><rect x="793" y="755" width="4" height="3" fill="#ddd"/>
<rect x="824" y="743" width="15" height="16" fill="#f26b0c"/>
<rect x="818" y="765" width="28" height="2" fill="#76b9ed"/>

<!-- tray -->
<circle cx="1006" cy="752" r="9" fill="#fff" stroke="#26a8dc" stroke-width="2.500"/>
<text x="1001" y="757" style="font-size:14px;font-weight:bold;fill:#26a8dc">?</text>
<circle cx="1013" cy="758" r="4.500" fill="#f0a830"/><path d="M1013 755.500v3M1013 759.500v1" stroke="#fff"/>
<g fill="none" stroke="#e8e8e8" stroke-width="1.200"><circle cx="1044" cy="747" r="2.700"/><path d="M1040 756q0-5 4-5 5 0 5 5"/><circle cx="1038" cy="752" r="2.500"/><path d="M1034 760q0-5 4-4 4 0 4 4"/></g>
<path d="M1066 755l5-5 5 5" fill="none" stroke="#e8e8e8" stroke-width="1.300"/>
<ellipse cx="1095" cy="752" rx="6.500" ry="7.500" fill="none" stroke="#e0202c" stroke-width="3.200"/>
<g fill="none" stroke="#e8e8e8"><path d="M1115 759q0-6 7-8M1118 759q0-4 4-5M1113 754q3-5 10-6" /></g><circle cx="1123" cy="759" r="1" fill="#e8e8e8"/>
<g stroke="#f0f0f0" fill="none"><rect x="1141.500" y="748.500" width="13" height="8"/><path d="M1137 745v12M1134 748v3h6v-3M1145 750l4 4M1149 750l-4 4"/></g>
<circle cx="1167" cy="752" r="8" fill="#c8c020"/><path d="M1167 747v10M1162 752h10" stroke="#2c6e20" stroke-width="2.400"/>
<path d="M1190 759q-4-2 0-4M1190 759q5 0 4-4l5-9 3 1-4 10q-3 3-8 2zM1200 750l3 1" fill="none" stroke="#e8e8e8" stroke-width="1.200"/>
<rect x="1216.500" y="745.500" width="22" height="12" fill="none" stroke="#f0f0f0"/><path d="M1219 748.500h17M1219 751h17M1222 754.500h11" stroke="#d0d0d0" stroke-dasharray="1 1"/>
<text x="1277" y="748" text-anchor="middle" style="font-size:11px;fill:#e8e8e8">20:04</text>
<text x="1277" y="764" text-anchor="middle" style="font-size:11px;fill:#e8e8e8">24/12/2020</text>
<path d="M1326 745h15v12h-5l-2.500 3-2.500-3h-5z" fill="#fff"/><path d="M1329 748h9M1329 751h9M1329 754h6" stroke="#0a0c14"/>
<path d="M1361.500 737v30" stroke="#666"/>
</svg>
</body></html>
